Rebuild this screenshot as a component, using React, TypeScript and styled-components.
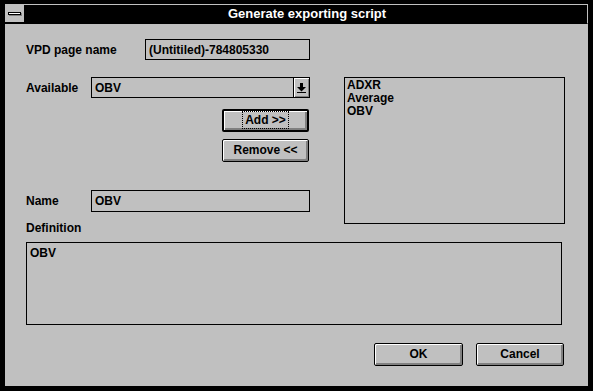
import React from "react";
import styled, { createGlobalStyle } from "styled-components";

const Global = createGlobalStyle`
  html, body { margin: 0; padding: 0; background: #000; }
  body { font-family: "Liberation Sans", Arial, sans-serif; }
`;

const Screen = styled.div`
  width: 593px;
  height: 391px;
  box-sizing: border-box;
  background: #000;
  padding: 4px 5px 5px 5px;
  display: flex;
  flex-direction: column;
`;

const TitleBar = styled.div`
  height: 20px;
  box-sizing: border-box;
  border-top: 1px solid #c0c0c0;
  border-right: 1px solid #c0c0c0;
  border-bottom: 1px solid #000;
  display: flex;
  align-items: stretch;
`;

const SysBox = styled.div`
  width: 19px;
  background: #c0c0c0;
  display: flex;
  align-items: center;
  justify-content: center;
  margin-bottom: 1px;
`;

const SysBar = styled.div`
  width: 11px;
  height: 1px;
  background: #fff;
  border: 1px solid #000;
  box-shadow: 1px 1px 0 #808080;
`;

const Title = styled.div`
  flex: 1;
  color: #fff;
  font-weight: bold;
  font-size: 13px;
  display: flex;
  align-items: center;
  justify-content: center;
  padding-bottom: 1px;
  padding-left: 3px;
`;

const Client = styled.div`
  flex: 1;
  background: #c0c0c0;
  padding: 15px 0 0 21px;
  display: flex;
  flex-direction: column;
  font-size: 12px;
  font-weight: bold;
  color: #000;
`;

const Row = styled.div<{ $h: number; $mt?: number }>`
  display: flex;
  align-items: center;
  height: ${(p) => p.$h}px;
  margin-top: ${(p) => p.$mt ?? 0}px;
`;

const Label = styled.div<{ $w: number }>`
  width: ${(p) => p.$w}px;
  flex-shrink: 0;
`;

const Field = styled.div<{ $w: number }>`
  width: ${(p) => p.$w}px;
  height: 100%;
  box-sizing: border-box;
  border: 1px solid #000;
  padding: 0 3px;
  display: flex;
  align-items: center;
  position: relative;
`;

const Middle = styled.div`
  display: flex;
  margin-top: 17px;
`;

const LeftCol = styled.div`
  width: 284px;
  display: flex;
  flex-direction: column;
`;

const DropBtn = styled.div`
  position: absolute;
  right: 0;
  top: 0;
  bottom: 0;
  width: 16px;
  border-left: 1px solid #000;
  box-sizing: border-box;
  box-shadow: inset 1px 1px #fff, inset -1px -1px #808080;
  display: flex;
  align-items: center;
  justify-content: center;
`;

const Btn = styled.button<{ $default?: boolean; $w: number; $mt?: number }>`
  width: ${(p) => p.$w}px;
  height: 23px;
  margin-top: ${(p) => p.$mt ?? 0}px;
  box-sizing: border-box;
  border: ${(p) => (p.$default ? 2 : 1)}px solid #000;
  border-radius: 2px;
  background: #c0c0c0;
  box-shadow: inset 1px 1px #fff, inset -2px -2px #808080;
  font-family: "Liberation Sans", Arial, sans-serif;
  font-weight: bold;
  font-size: 12px;
  color: #000;
  padding: 0 0 1px 0;
  display: flex;
  align-items: center;
  justify-content: center;
  flex-shrink: 0;
`;

const BtnStack = styled.div`
  display: flex;
  flex-direction: column;
  align-items: flex-end;
  padding-right: 1px;
`;

const Focus = styled.span`
  outline: 1px dotted #000;
  padding: 1px 2px;
  line-height: 14px;
`;

const ListBox = styled.div`
  margin-left: 34px;
  width: 221px;
  height: 147px;
  box-sizing: border-box;
  border: 1px solid #000;
  padding: 1px 2px;
  line-height: 13px;
`;

const DefLabel = styled.div`
  height: 14px;
  line-height: 14px;
  margin-top: 9px;
`;

const DefBox = styled.div`
  margin-top: 7px;
  width: 536px;
  height: 83px;
  box-sizing: border-box;
  border: 1px solid #000;
  padding: 3px 3px;
  line-height: 14px;
`;

const ButtonRow = styled.div`
  display: flex;
  justify-content: flex-end;
  gap: 13px;
  margin-top: 18px;
  padding-right: 24px;
`;

const DownArrow = () => (
  <svg width="9" height="10" viewBox="0 0 9 10">
    <rect x="3" y="0" width="3" height="4" fill="#000" />
    <polygon points="0,4 9,4 4.5,8.5" fill="#000" />
    <rect x="0" y="9" width="9" height="1" fill="#000" />
  </svg>
);

export default function App() {
  return (
    <>
      <Global />
      <Screen>
        <TitleBar>
          <SysBox>
            <SysBar />
          </SysBox>
          <Title>Generate exporting script</Title>
        </TitleBar>
        <Client>
          <Row $h={21}>
            <Label $w={119}>VPD page name</Label>
            <Field $w={165}>(Untitiled)-784805330</Field>
          </Row>
          <Middle>
            <LeftCol>
              <Row $h={21}>
                <Label $w={65}>Available</Label>
                <Field $w={219}>
                  OBV
                  <DropBtn>
                    <DownArrow />
                  </DropBtn>
                </Field>
              </Row>
              <BtnStack>
                <Btn $default $w={87} $mt={11}>
                  <Focus>Add &gt;&gt;</Focus>
                </Btn>
                <Btn $w={87} $mt={7}>
                  Remove &lt;&lt;
                </Btn>
              </BtnStack>
              <Row $h={22} $mt={28}>
                <Label $w={65}>Name</Label>
                <Field $w={219}>OBV</Field>
              </Row>
              <DefLabel>Definition</DefLabel>
            </LeftCol>
            <ListBox>
              <div>ADXR</div>
              <div>Average</div>
              <div>OBV</div>
            </ListBox>
          </Middle>
          <DefBox>OBV</DefBox>
          <ButtonRow>
            <Btn $w={89}>OK</Btn>
            <Btn $w={88}>Cancel</Btn>
          </ButtonRow>
        </Client>
      </Screen>
    </>
  );
}
